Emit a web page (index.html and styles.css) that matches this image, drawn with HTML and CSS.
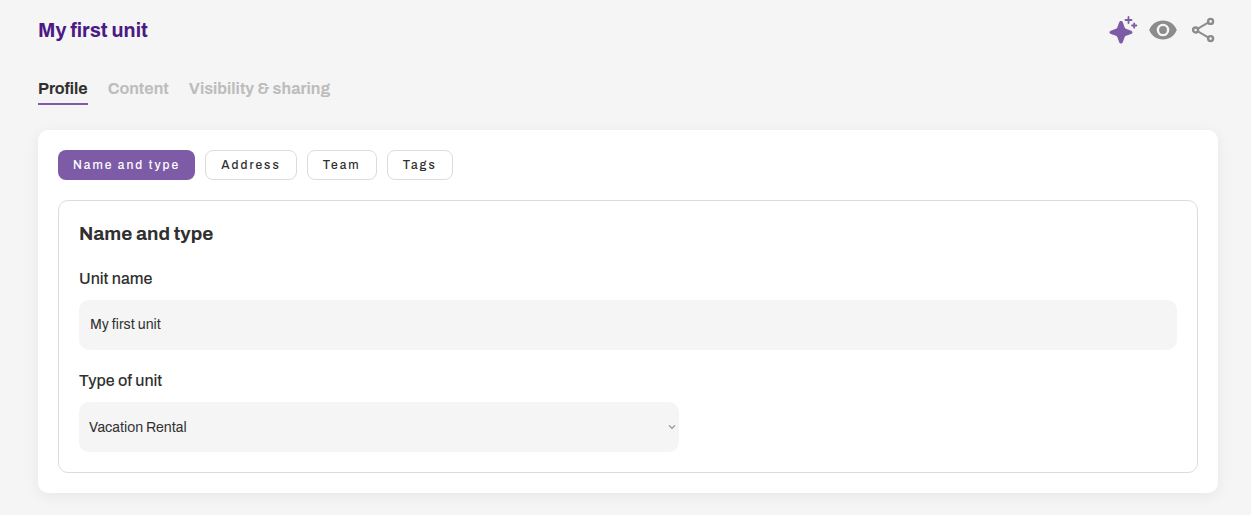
FILE: index.html
```html
<!DOCTYPE html>
<html lang="en">
<head>
<meta charset="utf-8">
<meta name="viewport" content="width=device-width, initial-scale=1">
<title>My first unit</title>
<link rel="stylesheet" href="styles.css">
</head>
<body>
<main class="page">
  <header class="header">
    <h1 class="title">My first unit</h1>
    <div class="actions">
      <button class="action action-ai" type="button" aria-label="Assistant">
        <svg class="icon" viewBox="-1 0 28 28" width="28" height="28" aria-hidden="true">
          <path d="M12 4.900c.9 0 1.500.5 1.800 1.400l1.900 5.200c.2.700.6 1.100 1.300 1.300l5.200 1.900c1.800.6 1.800 2.600 0 3.200l-5.200 1.900c-.7.200-1.100.6-1.300 1.300l-1.900 5.200c-.6 1.700-3 1.700-3.600 0l-1.900-5.200c-.2-.7-.6-1.100-1.300-1.300l-5.200-1.900c-1.800-.6-1.800-2.600 0-3.200L7 12.800c.7-.2 1.100-.6 1.300-1.300l1.900-5.200c.3-.9.900-1.400 1.800-1.400z" fill="currentColor"/>
          <path d="M19.500 1v6M16.500 4h6M25.200 7.300v4.400M23 9.500h4.400" fill="none" stroke="currentColor" stroke-width="1.800" stroke-linecap="round"/>
        </svg>
      </button>
      <button class="action" type="button" aria-label="Preview">
        <svg class="icon" viewBox="0 0 28 28" width="28" height="28" aria-hidden="true">
          <path fill-rule="evenodd" d="M14 4.500C7.600 4.500 2.500 8.300.2 14c2.300 5.700 7.400 9.500 13.800 9.500s11.500-3.800 13.800-9.500C25.500 8.300 20.400 4.500 14 4.500zm0 3.200a6.300 6.300 0 1 1 0 12.600 6.300 6.300 0 0 1 0-12.600z" fill="currentColor"/>
          <circle cx="14" cy="14" r="3.900" fill="currentColor"/>
        </svg>
      </button>
      <button class="action" type="button" aria-label="Share">
        <svg class="icon" viewBox="0 0 28 28" width="28" height="28" aria-hidden="true" fill="none" stroke="currentColor" stroke-width="2.400">
          <circle cx="5.600" cy="14" r="2.500"/>
          <circle cx="20.600" cy="5.400" r="2.500"/>
          <circle cx="20.600" cy="22.600" r="2.500"/>
          <path d="M7.900 12.600l10.200-5.900M7.900 15.400l10.200 5.900" stroke-width="2"/>
        </svg>
      </button>
    </div>
  </header>

  <nav class="tabs">
    <a class="tab tab-active" href="#profile" aria-current="page">Profile</a>
    <a class="tab" href="#content">Content</a>
    <a class="tab" href="#sharing">Visibility &amp; sharing</a>
  </nav>

  <section class="card">
    <div class="chips">
      <button class="chip chip-active" type="button">Name and type</button>
      <button class="chip" type="button">Address</button>
      <button class="chip" type="button">Team</button>
      <button class="chip" type="button">Tags</button>
    </div>
    <form class="panel">
      <h2 class="panel-title">Name and type</h2>
      <div class="field">
        <label class="label" for="unit-name">Unit name</label>
        <input class="control" id="unit-name" type="text" value="My first unit">
      </div>
      <div class="field">
        <label class="label" for="unit-type">Type of unit</label>
        <div class="select">
          <select class="control control-select" id="unit-type">
            <option>Vacation Rental</option>
          </select>
          <svg class="chevron" viewBox="0 0 8 6" width="8" height="6" aria-hidden="true">
            <path d="M1 1.300l3 3 3-3" fill="none" stroke="currentColor" stroke-width="1.200"/>
          </svg>
        </div>
      </div>
    </form>
  </section>
</main>
</body>
</html>
```
FILE: styles.css
```css
* {
  box-sizing: border-box;
}

body {
  margin: 0;
  background: #f5f5f5;
  color: #303030;
  font-family: Archivo, "Liberation Sans", Arial, sans-serif;
}

.page {
  padding: 15px 33px 22px 38px;
}

.header {
  display: flex;
  align-items: center;
  justify-content: space-between;
  height: 30px;
}

.title {
  margin: 0;
  color: #4b1a85;
  font-size: 20px;
  font-weight: 700;
  line-height: 30px;
}

.actions {
  display: flex;
  gap: 13px;
}

.action {
  display: flex;
  padding: 0;
  border: 0;
  background: none;
  color: #8c8c8c;
}

.action-ai {
  color: #7e5ba6;
}

.icon {
  overflow: visible;
}

.tabs {
  display: flex;
  gap: 20px;
  margin: 34px 0 25px;
}

.tab {
  padding-bottom: 4px;
  border-bottom: 2px solid transparent;
  color: #bdbdbd;
  font-size: 16px;
  font-weight: 700;
  line-height: 20px;
  text-decoration: none;
}

.tab-active {
  border-color: #7e5ba6;
  color: #303030;
}

.card {
  padding: 20px;
  border-radius: 10px;
  background: #fff;
  box-shadow: 0 3px 16px rgba(0, 0, 0, 0.06);
}

.chips {
  display: flex;
  gap: 10px;
  margin-bottom: 20px;
}

.chip {
  height: 30px;
  padding: 0 15px;
  border: 1px solid #dcdcdc;
  border-radius: 8px;
  background: #fff;
  color: #303030;
  font: 500 12px/28px Archivo, "Liberation Sans", Arial, sans-serif;
  letter-spacing: 2px;
}

.chip-active {
  border: 0;
  background: #7e5ba6;
  color: #fff;
}

.panel {
  display: flex;
  flex-direction: column;
  gap: 20px;
  padding: 20px;
  border: 1px solid #dcdcdc;
  border-radius: 10px;
}

.panel-title {
  margin: 0;
  font-size: 19px;
  font-weight: 700;
  line-height: 26px;
}

.field {
  display: flex;
  flex-direction: column;
  gap: 10px;
}

.field:first-of-type {
  padding-top: 1px;
}

.label {
  font-size: 16px;
  font-weight: 500;
  line-height: 22px;
}

.control {
  width: 100%;
  height: 50px;
  padding: 0 11px 2px;
  border: 0;
  border-radius: 10px;
  background: #f5f5f5;
  color: #303030;
  font: 14px Archivo, "Liberation Sans", Arial, sans-serif;
}

.control-select {
  padding: 0 10px;
  appearance: none;
}

.select {
  position: relative;
  max-width: 600px;
}

.chevron {
  position: absolute;
  top: 22px;
  right: 3px;
  color: #909090;
  pointer-events: none;
}
```
